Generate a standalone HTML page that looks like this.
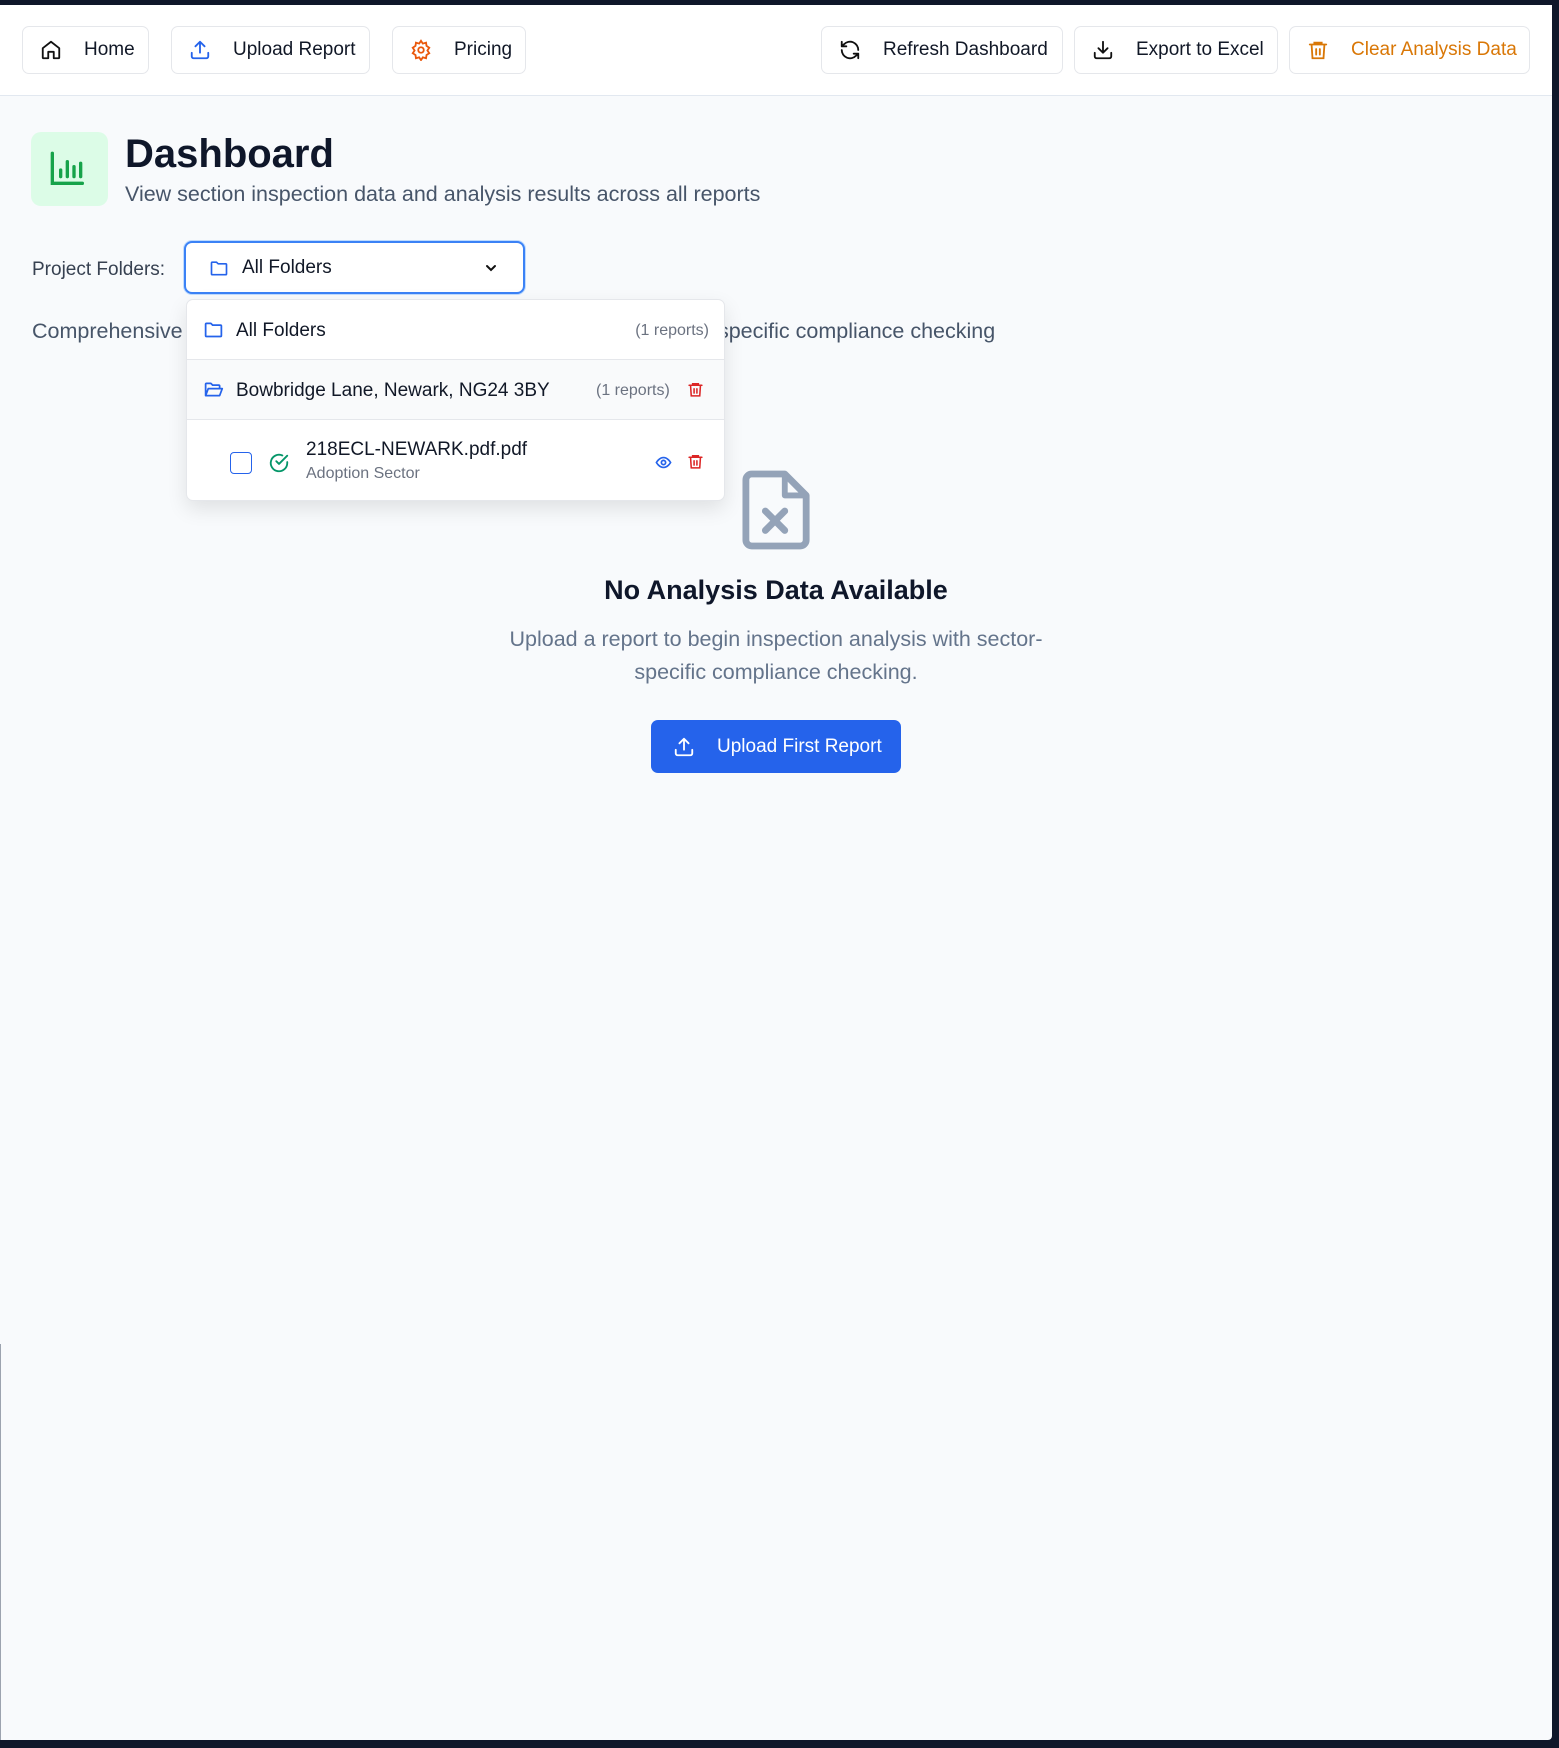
<!DOCTYPE html>
<html><head><meta charset="utf-8"><style>
*{box-sizing:border-box;margin:0;padding:0}
body{width:1559px;height:1748px;background:#0f172a;font-family:"Liberation Sans",Arial,sans-serif;position:relative;overflow:hidden}
#app{position:absolute;left:0;top:5px;width:1552px;height:1735px;background:#f8fafc;border-radius:0 0 4px 0;overflow:hidden}
.hdr{position:absolute;left:0;top:0;width:100%;height:91px;background:#fff;border-bottom:1px solid #e2e8f0}
.btn{position:absolute;top:21px;height:48px;border:1px solid #e5e7eb;border-radius:7px;background:#fff;display:flex;align-items:center;font-size:19px;color:#111827}
.btn svg{margin-left:17px;margin-right:22px}
.abs{position:absolute}
svg{display:block}
</style></head><body><div id="app">
<div class="hdr">
<div class="btn" style="left:22px;width:127px"><svg width="22" height="22" viewBox="0 0 24 24" fill="none" stroke="#111" stroke-width="2" stroke-linecap="round" stroke-linejoin="round"><path d="M3 10l9-7 9 7v10a1 1 0 0 1-1 1h-5v-7H9v7H4a1 1 0 0 1-1-1z"/></svg>Home</div>
<div class="btn" style="left:171px;width:199px"><svg width="22" height="22" viewBox="0 0 24 24" fill="none" stroke="#2563eb" stroke-width="2" stroke-linecap="round" stroke-linejoin="round"><path d="M21 15v4a2 2 0 0 1-2 2H5a2 2 0 0 1-2-2v-4M17 8l-5-5-5 5M12 3v12"/></svg>Upload Report</div>
<div class="btn" style="left:392px;width:134px"><svg width="22" height="22" viewBox="0 0 24 24" fill="none" stroke="#ea580c" stroke-width="2"><circle cx="12" cy="12" r="3"/><path d="M12 2l2 3 3.5-1 .5 3.5 3 2-2 3 2 3-3 2-.5 3.5-3.5-1-2 3-2-3-3.5 1-.5-3.5-3-2 2-3-2-3 3-2 .5-3.5 3.5 1z"/></svg>Pricing</div>
<div class="btn" style="left:821px;width:242px"><svg width="22" height="22" viewBox="0 0 24 24" fill="none" stroke="#111" stroke-width="2" stroke-linecap="round" stroke-linejoin="round"><path d="M21 12a9 9 0 0 0-15.5-6.3L3 8M3 3v5h5M3 12a9 9 0 0 0 15.5 6.3L21 16M21 21v-5h-5"/></svg>Refresh Dashboard</div>
<div class="btn" style="left:1074px;width:204px"><svg width="22" height="22" viewBox="0 0 24 24" fill="none" stroke="#111" stroke-width="2" stroke-linecap="round" stroke-linejoin="round"><path d="M21 15v4a2 2 0 0 1-2 2H5a2 2 0 0 1-2-2v-4M7 10l5 5 5-5M12 15V3"/></svg>Export to Excel</div>
<div class="btn" style="left:1289px;width:241px;color:#d97706"><svg width="22" height="22" viewBox="0 0 24 24" fill="none" stroke="#d97706" stroke-width="2" stroke-linecap="round"><path d="M3 6h18M8 6V4h8v2M5 6l1 15h12l1-15M10 11v6M14 11v6"/></svg>Clear Analysis Data</div>
</div>

<div class="abs" style="left:31px;top:127px;width:77px;height:74px;background:#dcfce7;border-radius:10px"><svg style="margin:18px 0 0 18px" width="40" height="40" viewBox="0 0 24 24" fill="none" stroke="#16a34a" stroke-width="2" stroke-linecap="round"><path d="M3 3v18h18M8 17v-4M12 17V8M16 17v-6M20 17V9" transform="translate(-1 -1)"/></svg></div>
<div class="abs" style="left:125px;top:127px;font-size:40px;font-weight:bold;color:#0f172a">Dashboard</div>
<div class="abs" style="left:125px;top:177px;font-size:21.5px;color:#475569">View section inspection data and analysis results across all reports</div>

<div class="abs" style="left:32px;top:254px;font-size:19px;color:#374151">Project Folders:</div>
<div class="abs" style="left:184px;top:236px;width:341px;height:53px;border:2px solid #3b82f6;border-radius:8px;background:#fff;box-shadow:0 0 0 1px #bfdbfe"><svg class="abs" style="left:23px;top:15px" width="20" height="20" viewBox="0 0 24 24" fill="none" stroke="#2563eb" stroke-width="2" stroke-linejoin="round"><path d="M3 6a1 1 0 0 1 1-1h5l2 2h9a1 1 0 0 1 1 1v11a1 1 0 0 1-1 1H4a1 1 0 0 1-1-1z"/></svg><span class="abs" style="left:56px;top:14px;font-size:19px;color:#111827">All Folders</span><svg class="abs" style="left:297px;top:17px" width="16" height="16" viewBox="0 0 24 24" fill="none" stroke="#111" stroke-width="3" stroke-linecap="round"><path d="M6 9l6 6 6-6"/></svg></div>

<div class="abs" style="left:32px;top:314px;font-size:21.5px;color:#475569;white-space:nowrap">Comprehensive section inspection data analysis and results with sector-specific compliance checking</div>

<div class="abs" style="left:186px;top:294px;width:539px;height:202px;background:#fff;border:1px solid #e5e7eb;border-radius:7px;box-shadow:0 8px 20px rgba(0,0,0,.1);overflow:hidden">
 <div class="abs" style="left:0;top:0;width:100%;height:60px;border-bottom:1px solid #e5e7eb">
  <svg class="abs" style="left:16px;top:19px" width="21" height="21" viewBox="0 0 24 24" fill="none" stroke="#2563eb" stroke-width="2" stroke-linejoin="round"><path d="M3 6a1 1 0 0 1 1-1h5l2 2h9a1 1 0 0 1 1 1v11a1 1 0 0 1-1 1H4a1 1 0 0 1-1-1z"/></svg>
  <span class="abs" style="left:49px;top:20px;font-size:19px;color:#111827">All Folders</span>
  <span class="abs" style="right:15px;top:22px;font-size:16px;color:#6b7280">(1 reports)</span></div>
 <div class="abs" style="left:0;top:60px;width:100%;height:60px;background:#f9fafb;border-bottom:1px solid #e5e7eb">
  <svg class="abs" style="left:16px;top:19px" width="21" height="21" viewBox="0 0 24 24" fill="none" stroke="#2563eb" stroke-width="2" stroke-linejoin="round"><path d="M3 19V6a1 1 0 0 1 1-1h5l2 2h7a1 1 0 0 1 1 1v2M3 19l3-8h16l-3 8z"/></svg>
  <span class="abs" style="left:49px;top:20px;font-size:19px;color:#111827">Bowbridge Lane, Newark, NG24 3BY</span>
  <span class="abs" style="left:409px;top:22px;font-size:16px;color:#6b7280">(1 reports)</span>
  <svg class="abs" style="left:500px;top:21px" width="17" height="17" viewBox="0 0 24 24" fill="none" stroke="#dc2626" stroke-width="2.2" stroke-linecap="round"><path d="M3 6h18M8 6V4h8v2M5 6l1 15h12l1-15M10 11v6M14 11v6"/></svg></div>
 <div class="abs" style="left:0;top:120px;width:100%;height:82px">
  <div class="abs" style="left:43px;top:32px;width:22px;height:22px;border:1.5px solid #2563eb;border-radius:4px"></div>
  <svg class="abs" style="left:81px;top:32px" width="22" height="22" viewBox="0 0 24 24" fill="none" stroke="#059669" stroke-width="2" stroke-linecap="round" stroke-linejoin="round"><path d="M21 11v1a9 9 0 1 1-5.3-8.2M21 4l-9 9-3-3"/></svg>
  <span class="abs" style="left:119px;top:19px;font-size:19px;color:#111827">218ECL-NEWARK.pdf.pdf</span>
  <span class="abs" style="left:119px;top:45px;font-size:16px;color:#6b7280">Adoption Sector</span>
  <svg class="abs" style="left:468px;top:34px" width="17" height="17" viewBox="0 0 24 24" fill="none" stroke="#2563eb" stroke-width="2.4"><path d="M2 12s4-7 10-7 10 7 10 7-4 7-10 7S2 12 2 12z"/><circle cx="12" cy="12" r="3"/></svg>
  <svg class="abs" style="left:500px;top:33px" width="17" height="17" viewBox="0 0 24 24" fill="none" stroke="#dc2626" stroke-width="2.2" stroke-linecap="round"><path d="M3 6h18M8 6V4h8v2M5 6l1 15h12l1-15M10 11v6M14 11v6"/></svg></div>
</div>

<svg class="abs" style="left:742px;top:464px" width="70" height="82" viewBox="0 0 72 82" fill="none" stroke="#94a3b8" stroke-width="7" stroke-linejoin="round" stroke-linecap="round"><path d="M10 4h34l22 22v46a6 6 0 0 1-6 6H10a6 6 0 0 1-6-6V10a6 6 0 0 1 6-6z"/><path d="M44 4v22h22" stroke-width="6"/><path d="M24 42l20 20M44 42L24 62"/></svg>
<div class="abs" style="left:0;width:1552px;top:570px;text-align:center;font-size:27px;font-weight:bold;color:#0f172a">No Analysis Data Available</div>
<div class="abs" style="left:496px;width:560px;top:618px;text-align:center;font-size:21.5px;line-height:33px;color:#64748b">Upload a report to begin inspection analysis with sector-specific compliance checking.</div>
<div class="abs" style="left:651px;top:715px;width:250px;height:53px;background:#2563eb;border-radius:7px;color:#fff;font-size:19px;display:flex;align-items:center"><svg style="margin:0 22px 0 22px" width="22" height="22" viewBox="0 0 24 24" fill="none" stroke="#fff" stroke-width="2" stroke-linecap="round" stroke-linejoin="round"><path d="M21 15v4a2 2 0 0 1-2 2H5a2 2 0 0 1-2-2v-4M17 8l-5-5-5 5M12 3v12"/></svg>Upload First Report</div>
<div class="abs" style="left:0;top:1339px;width:1px;height:400px;background:#9ca3af"></div>
</div></body></html>
